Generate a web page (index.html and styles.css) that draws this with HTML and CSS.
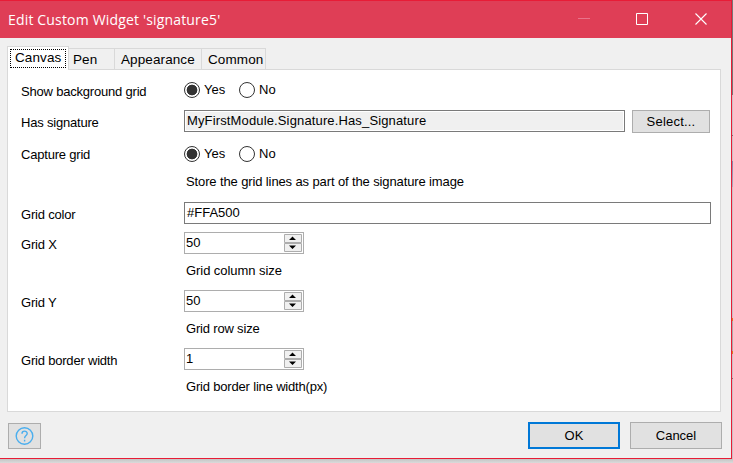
FILE: index.html
```html
<!DOCTYPE html>
<html lang="en">
<head>
<meta charset="utf-8">
<title>Edit Custom Widget</title>
<link rel="stylesheet" href="styles.css">
</head>
<body>
<div class="desktop">
<main class="window">
  <header class="titlebar">
    <h1>Edit Custom Widget 'signature5'</h1>
    <svg class="controls" width="146" height="37" viewBox="0 0 146 37" fill="none">
      <path d="M0 17.5H12" stroke="#e9738a"/>
      <path d="M58.5 12.5h11v11h-11z" stroke="#fff"/>
      <path d="M117.500 12.500l11 11M128.500 12.500l-11 11" stroke="#fff" stroke-width="1.1"/>
    </svg>
  </header>
  <nav class="tabs">
    <span class="tab active"><span class="focus">Canvas</span></span>
    <span class="tab pen">Pen</span>
    <span class="tab appearance">Appearance</span>
    <span class="tab common">Common</span>
  </nav>
  <section class="panel">
    <div class="row r30"><label>Show background grid</label><span class="radio on"></span><span class="opt">Yes</span><span class="radio"></span><span class="opt">No</span></div>
    <div class="row r32"><label>Has signature</label><span class="input readonly">MyFirstModule.Signature.Has_Signature</span><span class="button select">Select...</span></div>
    <div class="row r33"><label>Capture grid</label><span class="radio on"></span><span class="opt">Yes</span><span class="radio"></span><span class="opt">No</span></div>
    <div class="row r26 hint long">Store the grid lines as part of the signature image</div>
    <div class="row r34"><label>Grid color</label><span class="input">#FFA500</span></div>
    <div class="row r26"><label>Grid X</label><span class="spin">50<svg width="20" height="20" viewBox="0 0 20 20"><path d="M1.500 1.500h17v8h-17zM1.500 10.500h17v8h-17z" fill="#f0f0f0" stroke="#adadad"/><path d="M6 7h7L9.500 3.500zM6 12.500h7L9.500 16z"/></svg></span></div>
    <div class="row r30 hint first">Grid column size</div>
    <div class="row r30"><label>Grid Y</label><span class="spin">50<svg width="20" height="20" viewBox="0 0 20 20"><path d="M1.500 1.500h17v8h-17zM1.500 10.500h17v8h-17z" fill="#f0f0f0" stroke="#adadad"/><path d="M6 7h7L9.500 3.500zM6 12.500h7L9.500 16z"/></svg></span></div>
    <div class="row r28 hint">Grid row size</div>
    <div class="row r30"><label>Grid border width</label><span class="spin">1<svg width="20" height="20" viewBox="0 0 20 20"><path d="M1.500 1.500h17v8h-17zM1.500 10.500h17v8h-17z" fill="#f0f0f0" stroke="#adadad"/><path d="M6 7h7L9.500 3.500zM6 12.500h7L9.500 16z"/></svg></span></div>
    <div class="row r28 hint">Grid border line width(px)</div>
  </section>
  <footer>
    <span class="button help"><svg width="20" height="20" viewBox="0 0 20 20" fill="none" stroke="#4aaeee" stroke-width="1.400"><circle cx="9.500" cy="10" r="8.300"/><path d="M7 7.700C7 4.300 12.200 4.300 12.200 7.500C12.200 9.600 9.600 9.500 9.600 12.200M9.600 13.700v1.700"/></svg></span>
    <span class="button ok">OK</span>
    <span class="button cancel">Cancel</span>
  </footer>
</main>
<div class="edge"></div>
</div>
</body>
</html>
```
FILE: styles.css
```css
* { box-sizing: border-box; }
body { margin: 0; overflow: hidden; background: linear-gradient(#bcbcbc 459px, #c4c4c4 459px, #dadada 463px); font: 13px/16px "Liberation Sans", Arial, sans-serif; color: #000; }
.desktop { display: flex; width: 733px; height: 463px; }
.window { display: flex; flex-direction: column; width: 732px; height: 459px; background: #f0f0f0; border: solid #e81c36; border-width: 1px 1px 1px 0; }
.edge { width: 1px; height: 459px; background: linear-gradient(#777 95px, #c8c0c4 95px, #c8c0c4 135px, #777 135px, #777 136px, #c8c0c4 136px, #c8c0c4 161px, #88a 161px, #aab 187px, #c8c0c4 187px, #c8c0c4 318px, #e07820 318px, #e07820 321px, #aaa 321px, #aaa 351px, #e07820 351px, #e07820 354px, #c8c0c4 354px, #c8c0c4 378px, #777 378px, #777 379px, #c8c0c4 379px); }
.titlebar { display: flex; height: 37px; background: #df3e56; color: #fff; }
h1 { margin: 0; padding-left: 8px; width: 578px; font: 400 14px/37px "Open Sans", "Noto Sans", sans-serif; letter-spacing: .17px; white-space: nowrap; }
.tabs { display: flex; align-items: flex-end; height: 31px; padding-left: 7px; font-size: 13.5px; letter-spacing: .1px; }
.tab { height: 22px; margin-bottom: -1px; padding: 3px 0 0 5px; border: 1px solid #d9d9d9; border-left: 0; background: #f0f0f0; white-space: nowrap; }
.tab.active { position: relative; width: 62px; height: 24px; padding: 2px; border-left: 1px solid #d9d9d9; border-bottom: 0; background: #fff; }
.focus { display: block; width: 56px; height: 19px; border: 1px dotted #000; padding-left: 4px; line-height: 16px; }
.pen { width: 46px; padding-left: 4px; }
.appearance { width: 87px; padding-left: 6px; }
.common { width: 64px; padding-left: 6px; }
.panel { width: 714px; height: 343px; margin-left: 7px; padding: 5px 9px 0 13px; border: 1px solid #d9d9d9; background: #fff; flex: none; }
.row { display: flex; align-items: center; white-space: nowrap; }
.r26 { height: 26px; } .r28 { height: 28px; } .r30 { height: 30px; } .r32 { height: 32px; } .r33 { height: 33px; } .r34 { height: 34px; }
label { width: 163px; flex: none; padding-top: 3px; letter-spacing: -.2px; }
.hint { padding: 0 0 2px 165px; letter-spacing: -.18px; }
.hint.long { letter-spacing: -.12px; }
.hint.first { padding-bottom: 0; letter-spacing: -.06px; }
.radio { width: 16px; height: 16px; border: 1px solid #333; border-radius: 50%; background: #fff; }
.radio.on { background: radial-gradient(circle, #333 5px, #fff 5.700px); }
.opt { width: 39px; padding-left: 4px; }
.input { flex: 1; height: 22px; padding: 0 2px; border: 1px solid #7a7a7a; line-height: 20px; }
.readonly { margin-right: 7px; background: #f0f0f0; box-shadow: inset 0 0 0 1px #fff; letter-spacing: .14px; }
.button { display: flex; align-items: center; justify-content: center; border: 1px solid #adadad; background: #e1e1e1; }
.select { width: 78px; height: 23px; margin: 1px 1px 0 0; letter-spacing: .2px; }
.spin { display: flex; justify-content: space-between; width: 120px; height: 22px; padding-left: 1px; border: 1px solid #adadad; line-height: 19px; }
footer { display: flex; align-items: flex-start; padding: 10px 9px 0 8px; gap: 10px; }
.help { width: 33px; height: 26px; margin: 1px auto 0 0; }
.ok { width: 92px; height: 27px; border: 2px solid #0078d7; }
.cancel { width: 92px; height: 27px; }
```
